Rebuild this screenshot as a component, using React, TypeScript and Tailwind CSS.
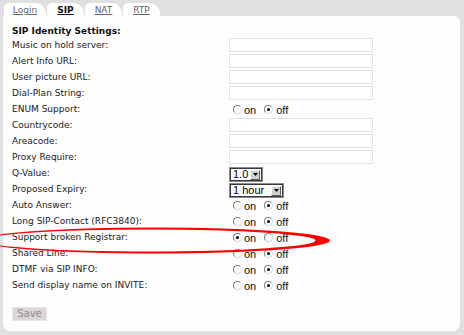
import React from "react";

type Row =
  | { label: string; kind: "input" }
  | { label: string; kind: "radio"; on: boolean }
  | { label: string; kind: "select"; value: string; w: string };

const rows: Row[] = [
  { label: "Music on hold server:", kind: "input" },
  { label: "Alert Info URL:", kind: "input" },
  { label: "User picture URL:", kind: "input" },
  { label: "Dial-Plan String:", kind: "input" },
  { label: "ENUM Support:", kind: "radio", on: false },
  { label: "Countrycode:", kind: "input" },
  { label: "Areacode:", kind: "input" },
  { label: "Proxy Require:", kind: "input" },
  { label: "Q-Value:", kind: "select", value: "1.0", w: "q" },
  { label: "Proposed Expiry:", kind: "select", value: "1 hour", w: "e" },
  { label: "Auto Answer:", kind: "radio", on: false },
  { label: "Long SIP-Contact (RFC3840):", kind: "radio", on: false },
  { label: "Support broken Registrar:", kind: "radio", on: true },
  { label: "Shared Line:", kind: "radio", on: false },
  { label: "DTMF via SIP INFO:", kind: "radio", on: false },
  { label: "Send display name on INVITE:", kind: "radio", on: false },
];

function Radio({ checked }: { checked: boolean }) {
  return (
    <span className="relative inline-block w-[9px] h-[9px] rounded-full border border-t-[#7a7a7a] border-l-[#7a7a7a] border-r-[#d8d8d8] border-b-[#d8d8d8] bg-white">
      {checked && (
        <span className="absolute left-[2px] top-[2px] w-[3px] h-[3px] rounded-full bg-black" />
      )}
    </span>
  );
}

function RadioPair({ on }: { on: boolean }) {
  return (
    <div className="flex items-center h-[16px] pl-[4px] pt-[1px] font-['Liberation_Sans',Arial,sans-serif] text-[11px] text-[#111]">
      <Radio checked={on} />
      <span className="ml-[2px] mt-[2px]">on</span>
      <span className="ml-[8px] flex items-center">
        <Radio checked={!on} />
      </span>
      <span className="ml-[3px] mt-[2px]">off</span>
    </div>
  );
}

function Select({ value, wide }: { value: string; wide: boolean }) {
  return (
    <div
      className={
        "mt-[2px] h-[15px] border border-[#8a8a8a] " + (wide ? "w-[55px]" : "w-[34px]")
      }
    >
      <div className="h-full w-full border border-[#383838] bg-white flex items-center justify-between pl-[2px] pr-[1px]">
        <span className="font-['Liberation_Sans',Arial,sans-serif] text-[11px] leading-[11px] text-black">
          {value}
        </span>
        <span className="w-[10px] h-[10px] bg-[#d4d0c8] border border-t-[#f4f4f4] border-l-[#f4f4f4] border-r-[#606060] border-b-[#606060] flex items-center justify-center">
          <svg width="5" height="3" viewBox="0 0 5 3">
            <path d="M0 0 H5 L2.5 3 Z" fill="#000" />
          </svg>
        </span>
      </div>
    </div>
  );
}

function Tab({ label, w, active }: { label: string; w: string; active?: boolean }) {
  return (
    <div
      className={
        "h-[13px] bg-white rounded-tl-[5px] rounded-tr-[11px] flex items-start justify-center pt-[2px] " +
        w
      }
    >
      <span
        className={
          "underline underline-offset-[1px] text-[9px] leading-[10px] " +
          (active ? "font-bold text-[#111]" : "text-[#666]")
        }
      >
        {label}
      </span>
    </div>
  );
}

export default function App() {
  return (
    <div className="relative w-[464px] h-[335px] overflow-hidden bg-[#e0e0e0] font-['DejaVu_Sans',Verdana,sans-serif]">
      <div className="flex h-[16px] pt-[3px] pl-[4px] gap-[1px]">
        <Tab label="Login" w="w-[42px]" />
        <Tab label="SIP" w="w-[37px]" active />
        <Tab label="NAT" w="w-[37px]" />
        <Tab label="RTP" w="w-[37px]" />
      </div>
      <div className="ml-[3px] w-[457px] h-[315px] bg-[#fdfdfd] rounded-tr-[6px] rounded-b-[7px] pt-[9px] pl-[9px]">
        <div className="h-[12px] text-[9px] leading-[12px] font-bold text-[#111]">
          SIP Identity Settings:
        </div>
        {rows.map((r, i) => (
          <div key={i} className="flex h-[16px]">
            <div className="w-[217px] text-[9px] leading-[16px] text-[#1a1a1a] whitespace-nowrap">
              {r.label}
            </div>
            <div className="flex-1">
              {r.kind === "input" && (
                <div className="mt-[1px] w-[144px] h-[14px] border border-[#e2e2e2] bg-white" />
              )}
              {r.kind === "radio" && <RadioPair on={r.on} />}
              {r.kind === "select" && <Select value={r.value} wide={r.w === "e"} />}
            </div>
          </div>
        ))}
        <div className="mt-[14px]">
          <button className="w-[35px] h-[14px] bg-[#ddd5d5] border border-[#e9e5e5] text-[#8c8c8c] text-[10px] leading-[12px] flex items-center justify-center">
            Save
          </button>
        </div>
      </div>
      <svg
        className="absolute left-0 top-0 pointer-events-none"
        width="464"
        height="335"
        viewBox="0 0 464 335"
      >
        <path
          fillRule="evenodd"
          fill="#f00"
          d="M-20 240.5 A175 13 0 1 0 330 240.5 A175 13 0 1 0 -20 240.5 Z M-18.5 240.5 A167 11 0 1 0 315.5 240.5 A167 11 0 1 0 -18.5 240.5 Z"
        />
      </svg>
    </div>
  );
}
